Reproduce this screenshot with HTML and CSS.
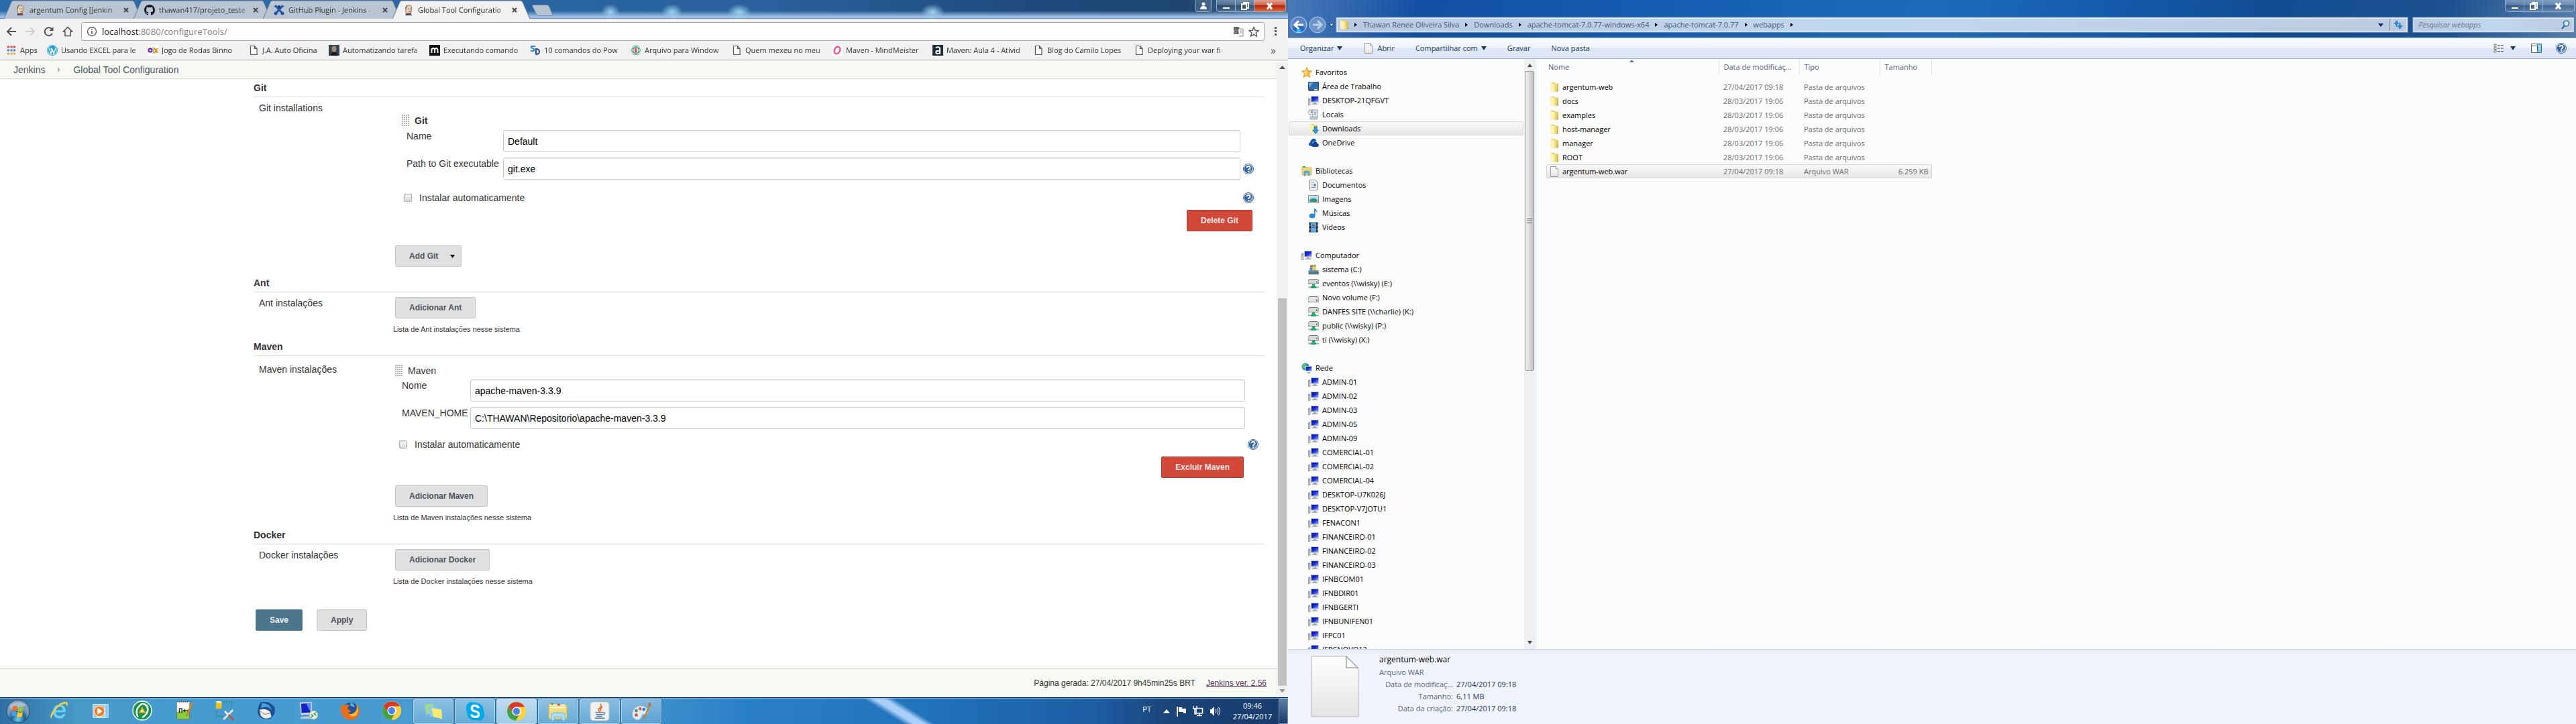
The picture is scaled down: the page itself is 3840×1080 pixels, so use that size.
FILE: index.html
```html
<!DOCTYPE html>
<html lang="pt-BR">
<head>
<meta charset="utf-8">
<title>Global Tool Configuration [Jenkins]</title>
<link rel="stylesheet" href="styles.css">
</head>
<body>
<svg class="defs" width="0" height="0" aria-hidden="true">
  <defs>
    <linearGradient id="g-folder" x1="0" x2="1"><stop offset="0" stop-color="#fbf0a8"/><stop offset=".5" stop-color="#ecd36c"/><stop offset="1" stop-color="#d9b948"/></linearGradient>
    <linearGradient id="g-screen" x1="0" x2="1" y2="1"><stop offset="0" stop-color="#0b10a8"/><stop offset=".5" stop-color="#1a2ed0"/><stop offset="1" stop-color="#8fb4f4"/></linearGradient>
    <linearGradient id="g-page" x2="0" y2="1"><stop offset="0" stop-color="#fff"/><stop offset="1" stop-color="#e4e4e4"/></linearGradient>
    <radialGradient id="g-orb" cy=".85"><stop offset="0" stop-color="#6fd3f5"/><stop offset=".6" stop-color="#1d5f96"/><stop offset="1" stop-color="#7f9db8"/></radialGradient>
    <radialGradient id="g-back" cy=".9"><stop offset="0" stop-color="#4fd0ff"/><stop offset=".5" stop-color="#1565c0"/><stop offset="1" stop-color="#5d86c8"/></radialGradient>
  </defs>
  <symbol id="i-help" viewBox="0 0 16 16"><circle cx="8" cy="8" r="7.500" fill="#fff" stroke="#3b629a"/><circle cx="8" cy="8" r="6.200" fill="#3465a4"/><path d="M8 14.200a6.200 6.200 0 0 0 6.200-6.200q-3 1-6.200 6.200z" fill="#7da2d2"/><path d="M5.500 6.300C5.500 3 10.500 3.200 10.500 6.200c0 1.700-2.400 1.800-2.400 3.700M8.100 11v2" fill="none" stroke="#fff" stroke-width="2"/></symbol>
  <symbol id="i-doc" viewBox="0 0 16 16"><path d="M3.500 1.500h6l3.500 4v9h-9.500zM9.500 1.500v4H13" fill="#fff" stroke="#555" stroke-width="1.200"/></symbol>
  <symbol id="i-butler" viewBox="0 0 16 16"><path d="M4 9c-1-4-1-8 4-8s5 3 4.500 6L11 13l-3 2-4-2z" fill="#ecd0b5" stroke="#6b5a4c" stroke-width=".8"/><path d="M4 8C3 3 5 1 7 1L5 4z" fill="#6d6557"/><path d="M3 16c1-3 2-3.500 5-3.500s4 1 5 3.500z" fill="#48555f"/><path d="M7 13l5-1.500v3z" fill="#d13a35"/><path d="M7 6h1M10 6h1M8 9.500h3" stroke="#333"/></symbol>
  <symbol id="i-github" viewBox="0 0 16 16"><path d="M8 0C3.580 0 0 3.580 0 8c0 3.540 2.290 6.530 5.470 7.590.4.070.55-.17.55-.38v-1.490c-2.010.37-2.530-.49-2.690-.94-.09-.23-.48-.94-.82-1.130-.28-.15-.68-.52-.01-.53.63-.01 1.080.58 1.230.82.72 1.210 1.870.87 2.330.66.07-.52.28-.87.51-1.070-1.780-.2-3.640-.89-3.640-3.950 0-.87.31-1.590.82-2.150-.08-.2-.36-1.020.08-2.120 0 0 .67-.21 2.200.82a7.600 7.600 0 0 1 4 0c1.530-1.040 2.200-.82 2.200-.82.44 1.100.16 1.920.08 2.120.51.56.82 1.270.82 2.150 0 3.070-1.870 3.750-3.650 3.950.29.25.54.73.54 1.480v2.200c0 .21.15.46.55.38A8 8 0 0 0 16 8c0-4.420-3.580-8-8-8z" fill="#14181c"/></symbol>
  <symbol id="i-xwiki" viewBox="0 0 16 16"><path d="M3 2l10 11M13 2L3 13" stroke="#2456a6" stroke-width="3"/><path d="M1 3l3-2M15 3l-3-2" stroke="#2456a6" stroke-width="2"/><circle cx="8" cy="3" r="2" fill="#16325c"/><circle cx="3" cy="13" r="2.500" fill="#2456a6"/><circle cx="13" cy="13" r="2.500" fill="#2456a6"/></symbol>
  <symbol id="i-folder" viewBox="0 0 16 16"><path d="M2 1h6l1 1.500h4v12H5L2 13z" fill="#e6cc62"/><path d="M2 1l5 2v12.500l-5-2z" fill="#fcf3b4"/><path d="M7 3h7v12H7z" fill="url(#g-folder)"/><path d="M13 10v4" stroke="#6aa8d8"/></symbol>
  <symbol id="i-sheet" viewBox="0 0 16 16"><path d="M2.500.5h8l3 3.500v11.500h-11z" fill="url(#g-page)" stroke="#999"/><path d="M10.500.5V4h3" fill="#fff" stroke="#999"/></symbol>
  <symbol id="i-star" viewBox="0 0 16 16"><path d="M8 .5l2.200 5 5.300.5-4 3.700 1.300 5.800L8 12.500 3.200 15.500l1.300-5.800L.5 6l5.300-.5z" fill="#fdb833" stroke="#dc8a1a" stroke-width=".8"/><path d="M8 2.500v8L4.500 13 5.500 9.500 3 7l3.500-.5z" fill="#ffe29a"/></symbol>
  <symbol id="i-desk" viewBox="0 0 16 16"><rect x=".5" y="1.500" width="15" height="12" fill="#2f6fb2" stroke="#334a66"/><path d="M1 2h7L1 10z" fill="#6ca9e0"/><path d="M1 12h14v3H1z" fill="#4e5b69"/><path d="M9 12h5v2H9z" fill="#dfe6ec"/></symbol>
  <symbol id="i-pc" viewBox="0 0 16 16"><path d="M.5 5h2.500v9.500H.5z" fill="#c9cec9" stroke="#7b857b" stroke-width=".7"/><path d="M4 1h12v10H4z" fill="#c8ccd4"/><path d="M5 2h10v7.500H5z" fill="url(#g-screen)"/><path d="M8 11h4v1.500h2.500V14h-9v-1.500H8z" fill="#a5a9b0"/><path d="M1 7h1" stroke="#3fa34a"/></symbol>
  <symbol id="i-recent" viewBox="0 0 16 16"><circle cx="4.500" cy="4.500" r="4" fill="#f3f3f3" stroke="#8b8b8b"/><path d="M4.500 2v3h2" fill="none" stroke="#555"/><path d="M7 1h7v11H7z" fill="#eef3f7" stroke="#8b97a2"/><path d="M9 4h3M9 6h3M9 8h3" stroke="#5a86ae"/><path d="M3 11h11v4H3z" fill="#c2c7cc" stroke="#8b8b8b" stroke-width=".6"/></symbol>
  <symbol id="i-down" viewBox="0 0 16 16"><use href="#i-folder"/><path d="M9 5h4v5h2.500L11 15.500 6.500 10H9z" fill="#2d9be0" stroke="#1a6db0" stroke-width=".7"/></symbol>
  <symbol id="i-cloud" viewBox="0 0 16 16"><path d="M5 13C0 13 0 8 3 7.500 4 1 11 0 12 5l-5 2z" fill="#1755ae"/><path d="M7 14c-3-1-2-5 0-5 1-4 6-4 6.500 0 3 0 3 5 0 5z" fill="#0d429a"/></symbol>
  <symbol id="i-libs" viewBox="0 0 16 16"><path d="M1 2h5l1 1h8v11H1z" fill="#efd778" stroke="#c6a43c" stroke-width=".7"/><path d="M2 1h4v2H2z" fill="#4db04a"/><path d="M4 15V9q4-3 8 0v6h-2v-4H6v4z" fill="#5eb5e8" stroke="#3183bd" stroke-width=".6"/></symbol>
  <symbol id="i-text" viewBox="0 0 16 16"><path d="M2.500.5h8l3 3v12h-11z" fill="#fff" stroke="#777"/><path d="M4.500 4h5M4.500 6.500h3M4.500 9h3M4.500 11.500h7" stroke="#6f8397"/><path d="M8.500 6h3v4h-3z" fill="#2f87c8"/></symbol>
  <symbol id="i-image" viewBox="0 0 16 16"><path d="M.5 2.500h15v11H.5z" fill="#fff" stroke="#8c8c8c"/><path d="M2 4h12v8H2z" fill="#a6ddf2"/><path d="M2 9q6-4 12 0v3H2z" fill="#2c948b"/></symbol>
  <symbol id="i-music" viewBox="0 0 16 16"><ellipse cx="6" cy="12" rx="4.500" ry="3.500" fill="#2b8bd8"/><path d="M9 12V.5q4 2 5 7-2-2.500-3.500-3V12z" fill="#2b8bd8"/></symbol>
  <symbol id="i-video" viewBox="0 0 16 16"><path d="M1 .5h14v15H1z" fill="#353c44"/><path d="M4 1h8v6.500H4zM4 8.500h8V15H4z" fill="#5aaee8"/><path d="M2.500 1v14M13.500 1v14" stroke="#e8e8e8" stroke-dasharray="1 1"/><path d="M6 4h4v2H6z" fill="#a9502f"/></symbol>
  <symbol id="i-sys" viewBox="0 0 16 16"><path d="M1 9h14l1 2v4.500H.5V11z" fill="#7f8b95"/><path d="M1 11.500h14V15H1z" fill="#4b7f94"/><path d="M3 2l4-1v3.500L3 5.500z" fill="#e65a2c"/><path d="M7.500 1h4v4l-4-.5z" fill="#7cbb42"/><path d="M2.500 6l4-1v4h-4z" fill="#3b8ddb"/><path d="M7.500 5l4 .5V9h-4z" fill="#f6c331"/></symbol>
  <symbol id="i-net" viewBox="0 0 16 16"><path d="M2 1.500h12l2 2.500v4.500H0V4z" fill="#d9d9dc" stroke="#77777d"/><path d="M12 4.500h2V7h-2z" fill="#3fb05a"/><path d="M6 9h4v3h-4z" fill="#2fae77"/><path d="M0 13.500h16" stroke="#9bb5a8" stroke-width="2"/><path d="M4 13.500h8" stroke="#22a568" stroke-width="3"/></symbol>
  <symbol id="i-drive" viewBox="0 0 16 16"><path d="M2 6.500h12l2 3v5H0v-5z" fill="#e4e4e6" stroke="#77777d"/><path d="M12 10.500h2V13h-2z" fill="#4aa55a"/></symbol>
  <symbol id="i-rede" viewBox="0 0 16 16"><circle cx="6" cy="6" r="5.500" fill="#2b8fd6"/><path d="M2 3q4-3 5 0T4 9q-3-2-2-6z" fill="#67c45c"/><path d="M6 5h10v8H6z" fill="#c8ccd4"/><path d="M7 6h8v6H7z" fill="url(#g-screen)"/><path d="M9 14h4v2H9z" fill="#a5a9b0"/></symbol>
  <symbol id="i-chrome" viewBox="0 0 32 32"><circle cx="16" cy="16" r="15" fill="#fbd13c"/><path d="M3 8.500A15 15 0 0 1 29 9H16a7 7 0 0 0-6 10z" fill="#d83b2e"/><path d="M3 8.500A15 15 0 0 0 15 31l6-11a7 7 0 0 1-11-1z" fill="#45a148"/><circle cx="16" cy="16" r="7" fill="#fff"/><circle cx="16" cy="16" r="5.500" fill="#4a83ee"/></symbol>
  <symbol id="i-tabshape" viewBox="0 0 205 28"><path d="M0 28.500L11 3q1-2 3-2h177q2 0 3 2l11 25.500z" fill="currentColor" stroke="#6b7f96"/></symbol>
</svg>

<div class="desktop">
  <div class="left-screen">
    <section class="browser" aria-label="Google Chrome">
      <header class="tabstrip">
        <ul class="tabs">
          <li class="tab"><svg class="tab-shape"><use href="#i-tabshape"/></svg><svg class="ico"><use href="#i-butler"/></svg><span class="tab-text">argentum Config [Jenkin</span><button class="tab-x" aria-label="Fechar"><svg width="8" height="8"><path d="M1 1l6 6M7 1L1 7" stroke="#444" stroke-width="2"/></svg></button></li>
          <li class="tab"><svg class="tab-shape"><use href="#i-tabshape"/></svg><svg class="ico"><use href="#i-github"/></svg><span class="tab-text">thawan417/projeto_teste</span><button class="tab-x" aria-label="Fechar"><svg width="8" height="8"><path d="M1 1l6 6M7 1L1 7" stroke="#444" stroke-width="2"/></svg></button></li>
          <li class="tab"><svg class="tab-shape"><use href="#i-tabshape"/></svg><svg class="ico"><use href="#i-xwiki"/></svg><span class="tab-text">GitHub Plugin - Jenkins -</span><button class="tab-x" aria-label="Fechar"><svg width="8" height="8"><path d="M1 1l6 6M7 1L1 7" stroke="#444" stroke-width="2"/></svg></button></li>
          <li class="tab active"><svg class="tab-shape"><use href="#i-tabshape"/></svg><svg class="ico"><use href="#i-butler"/></svg><span class="tab-text">Global Tool Configuratio</span><button class="tab-x" aria-label="Fechar"><svg width="8" height="8"><path d="M1 1l6 6M7 1L1 7" stroke="#444" stroke-width="2"/></svg></button></li>
        </ul>
        <button class="newtab" aria-label="Nova guia"><svg width="34" height="18" viewBox="0 0 34 18"><path d="M1.500 2q0-1.500 2-1.500h20q2 0 3 2l5 12q1 2-1 2H11q-2 0-3-2z" fill="#b4c2d2" stroke="#7189a6"/></svg></button>
        <span class="grow"></span>
        <button class="glass-btn user" aria-label="Usuário"><svg width="10" height="12" viewBox="0 0 10 12"><circle cx="5" cy="3" r="2.500" fill="#fff"/><path d="M0 11q0-5 5-5t5 5z" fill="#fff"/></svg></button>
        <div class="winbtns">
          <button aria-label="Minimizar"><svg width="14" height="12"><path d="M1.500 7.500h11v3h-11z" fill="#fff" stroke="#456"/></svg></button>
          <button aria-label="Restaurar"><svg width="14" height="12"><path d="M4 1h8v8h-2M2 3h7v8H2z" fill="none" stroke="#fff" stroke-width="2"/></svg></button>
          <button class="close red" aria-label="Fechar"><svg width="14" height="12"><path d="M3 1.500l7 9M10 1.500l-7 9" stroke="#fff" stroke-width="3"/></svg></button>
        </div>
      </header>

      <div class="toolbar">
        <button class="nav" aria-label="Voltar"><svg width="16" height="16" viewBox="0 0 16 16"><path d="M15 8H2M8 2L2 8l6 6" fill="none" stroke="#555" stroke-width="2"/></svg></button>
        <button class="nav" aria-label="Avançar"><svg width="16" height="16" viewBox="0 0 16 16"><path d="M1 8h13M8 2l6 6-6 6" fill="none" stroke="#ccc" stroke-width="2"/></svg></button>
        <button class="nav" aria-label="Recarregar"><svg width="16" height="16" viewBox="0 0 16 16"><path d="M13 11a6 6 0 1 1-.5-6.500" fill="none" stroke="#555" stroke-width="2"/><path d="M14.500 1v6h-6z" fill="#555"/></svg></button>
        <button class="nav" aria-label="Início"><svg width="16" height="16" viewBox="0 0 16 16"><path d="M1.500 8L8 1.500 14.500 8H12v6.500H4V8z" fill="none" stroke="#555" stroke-width="1.600"/></svg></button>
        <div class="omnibox">
          <svg width="16" height="16" viewBox="0 0 16 16"><circle cx="8" cy="8" r="6.500" fill="none" stroke="#555" stroke-width="1.300"/><path d="M8 7v4.500M8 4.200v1.600" stroke="#555" stroke-width="1.600"/></svg>
          <span class="url">localhost<span class="path">:8080/configureTools/</span></span>
          <svg width="16" height="16" viewBox="0 0 16 16"><path d="M1 1h8l2 11H1z" fill="#666"/><path d="M8 4h7v11H9" fill="#fff" stroke="#888"/><path d="M7 6.500H5a2 2 0 1 0 .5 2.500M10 7h4M12 6c0 3-1 4-2 5M11 8l3 3" fill="none" stroke="#aaa"/></svg>
          <svg width="16" height="16" viewBox="0 0 16 16"><path d="M8 1.500l2 4.800 5 .4-3.800 3.300 1.200 5L8 12.300 3.600 15l1.200-5L1 6.700l5-.4z" fill="none" stroke="#555" stroke-width="1.400"/></svg>
        </div>
        <button class="nav dots" aria-label="Menu"><svg width="4" height="14"><path d="M0 0h3v3H0zM0 5h3v3H0zM0 10h3v3H0z" fill="#555"/></svg></button>
      </div>

      <nav class="bookmarks" aria-label="Favoritos">
        <a class="apps" href="#"><svg class="ico" viewBox="0 0 16 16"><path d="M2 3h12" stroke="#db4437" stroke-width="3" stroke-dasharray="3 1.500"/><path d="M2 8h12" stroke="#3e82d9" stroke-width="3" stroke-dasharray="3 1.500"/><path d="M2 13h12" stroke="#e9a53a" stroke-width="3" stroke-dasharray="3 1.500"/></svg><span>Apps</span></a>
        <a href="#"><svg class="ico" viewBox="0 0 16 16"><circle cx="8" cy="8" r="7.500" fill="#fff" stroke="#21a0cf"/><circle cx="8" cy="8" r="6.500" fill="#21a0cf"/><path d="M3 5l3 8 2-6 2 6 3-8M6 5l2 5" fill="none" stroke="#fff" stroke-width="1.400"/></svg><span>Usando EXCEL para le</span></a>
        <a href="#"><svg class="ico" viewBox="0 0 16 16"><path d="M0 0h16v16H0z" fill="#fff"/><circle cx="4" cy="8" r="2.600" fill="none" stroke="#6e0ad6" stroke-width="2"/><path d="M8.500 3v10" stroke="#8cc63f" stroke-width="1.600"/><path d="M10 5l5 7M15 5l-5 7" stroke="#f28000" stroke-width="2"/></svg><span>Jogo de Rodas Binno</span></a>
        <a class="narrow" href="#"><svg class="ico"><use href="#i-doc"/></svg><span>J.A. Auto Oficina</span></a>
        <a href="#"><svg class="ico" viewBox="0 0 16 16"><path d="M0 0h16v16H0z" fill="#32424e"/><ellipse cx="8" cy="6" rx="3.500" ry="4.500" fill="#a98a78"/><path d="M3 16q0-5 5-5t5 5z" fill="#15191d"/></svg><span>Automatizando tarefa</span></a>
        <a href="#"><svg class="ico" viewBox="0 0 16 16"><path d="M0 0h16v16H0z" fill="#111"/><path d="M3.500 12V5M3.500 7q1-2 2.500-2t2 2v5M8 7q1-2 2.500-2t2 2v5" fill="none" stroke="#fff" stroke-width="1.800"/></svg><span>Executando comando</span></a>
        <a href="#"><svg class="ico" viewBox="0 0 16 16"><path d="M8 2H3q-2 0-1 2l4 2q1 3-1 3H1" fill="none" stroke="#3a86d0" stroke-width="2"/><path d="M9 6v8q5 0 5-4t-5-4z" fill="none" stroke="#2b4fa8" stroke-width="2"/></svg><span>10 comandos do Pow</span></a>
        <a href="#"><svg class="ico" viewBox="0 0 16 16"><g fill="none" stroke="#4f9a86"><ellipse cx="8" cy="8" rx="7" ry="4"/><ellipse cx="8" cy="8" rx="7" ry="4" transform="rotate(60 8 8)"/><ellipse cx="8" cy="8" rx="7" ry="4" transform="rotate(120 8 8)"/></g><path d="M6.500 5v6h2q2-1.500 0-3 1.500-2-.2-3z" fill="#e33"/></svg><span>Arquivo para Window</span></a>
        <a href="#"><svg class="ico"><use href="#i-doc"/></svg><span>Quem mexeu no meu</span></a>
        <a href="#"><svg class="ico" viewBox="0 0 16 16"><path d="M0 0h16v16H0z" fill="#fff"/><ellipse cx="8" cy="8" rx="4" ry="5.500" transform="rotate(25 8 8)" fill="none" stroke="#e9537f" stroke-width="2.400"/></svg><span>Maven - MindMeister</span></a>
        <a href="#"><svg class="ico" viewBox="0 0 16 16"><path d="M0 0h16v16H0z" fill="#1b2b38"/><path d="M5 4q5-2 6 1v8H7q-3-1-1-4h5" fill="none" stroke="#fff" stroke-width="2"/></svg><span>Maven: Aula 4 - Ativid</span></a>
        <a href="#"><svg class="ico"><use href="#i-doc"/></svg><span>Blog do Camilo Lopes</span></a>
        <a href="#"><svg class="ico"><use href="#i-doc"/></svg><span>Deploying your war fi</span></a>
        <button class="more" aria-label="Mais favoritos">»</button>
      </nav>

      <div class="viewport">
        <div class="page">
          <nav class="crumbs"><a href="#">Jenkins</a><svg width="6" height="10"><path d="M1 1l4 4-4 4z" fill="#b5b9b0"/></svg><a href="#">Global Tool Configuration</a></nav>
          <form class="config">
            <h2>Git</h2>
            <div class="section git">
              <div class="sec-label">Git installations</div>
              <div class="sec-body">
                <div class="item">
                  <div class="item-head"><i class="grip"></i><b>Git</b></div>
                  <div class="fields">
                    <label for="gname">Name</label><input id="gname" type="text" value="Default">
                    <label for="gpath">Path to Git executable</label><input id="gpath" type="text" value="git.exe"><svg class="help"><use href="#i-help"/></svg>
                  </div>
                  <div class="auto"><input type="checkbox" id="gauto"><label for="gauto">Instalar automaticamente</label><svg class="help"><use href="#i-help"/></svg></div>
                  <div class="del"><button type="button" class="btn danger">Delete Git</button></div>
                </div>
                <button type="button" class="btn">Add Git<svg class="caret" width="7" height="5"><path d="M0 0h7L3.500 5z"/></svg></button>
              </div>
            </div>
            <h2>Ant</h2>
            <div class="section">
              <div class="sec-label">Ant instalações</div>
              <div class="sec-body"><button type="button" class="btn">Adicionar Ant</button><p class="note">Lista de Ant instalações nesse sistema</p></div>
            </div>
            <h2>Maven</h2>
            <div class="section maven">
              <div class="sec-label">Maven instalações</div>
              <div class="sec-body">
                <div class="item">
                  <div class="item-head"><i class="grip"></i><span>Maven</span></div>
                  <div class="fields">
                    <label for="mname">Nome</label><input id="mname" type="text" value="apache-maven-3.3.9">
                    <label for="mhome">MAVEN_HOME</label><input id="mhome" type="text" value="C:\THAWAN\Repositorio\apache-maven-3.3.9">
                  </div>
                  <div class="auto"><input type="checkbox" id="mauto"><label for="mauto">Instalar automaticamente</label><svg class="help"><use href="#i-help"/></svg></div>
                  <div class="del"><button type="button" class="btn danger">Excluir Maven</button></div>
                </div>
                <button type="button" class="btn">Adicionar Maven</button><p class="note">Lista de Maven instalações nesse sistema</p>
              </div>
            </div>
            <h2>Docker</h2>
            <div class="section">
              <div class="sec-label">Docker instalações</div>
              <div class="sec-body"><button type="button" class="btn">Adicionar Docker</button><p class="note">Lista de Docker instalações nesse sistema</p></div>
            </div>
            <div class="actions"><button type="button" class="btn primary">Save</button><button type="button" class="btn">Apply</button></div>
          </form>
          <footer class="foot"><span>Página gerada: 27/04/2017 9h45min25s BRT</span><a href="#">Jenkins ver. 2.56</a></footer>
        </div>
        <div class="vscroll" aria-hidden="true">
          <svg width="9" height="6"><path d="M0 6l4.500-5L9 6z" fill="#505050"/></svg>
          <div class="vtrack"><div class="vthumb"></div></div>
          <svg width="9" height="6"><path d="M0 0l4.500 5L9 0z" fill="#909090"/></svg>
        </div>
      </div>
    </section>

    <footer class="taskbar">
      <button class="start" aria-label="Iniciar"><svg width="36" height="36" viewBox="0 0 36 36"><circle cx="18" cy="18" r="17" fill="url(#g-orb)" stroke="#2a4a66"/><path d="M6 9q12-9 24 0-12 6-24 5z" fill="#fff" opacity=".35"/><path d="M10 11q4-2 7 0l-1 7q-4-2-7 0z" fill="#ee6a32"/><path d="M18 11q4 2 8 0l-1 7q-4 2-8 0z" fill="#8cc63f"/><path d="M9 19q4-2 7 0l-1 7q-3-2-7 0z" fill="#3fa0ea"/><path d="M17 19q4 2 8 0l-1 7q-4 2-8 0z" fill="#fbc72f"/></svg></button>
      <div class="tasks">
        <button aria-label="Internet Explorer"><svg viewBox="0 0 32 32"><path d="M27 19H11q1 5 6 5 4 0 5-3h5q-3 9-11 8Q6 28 6 17 7 6 17 6q11 1 10 13zM11 15h11q-1-5-5.500-5T11 15z" fill="#6fd0f6" stroke="#2b93cf" stroke-width=".8"/><path d="M4 29Q-1 25 9 13T28 2q4 2 0 8 1-5-3-5Q15 7 8 19T6 28z" fill="#f4cf45"/></svg></button>
        <button aria-label="Windows Media Player"><svg viewBox="0 0 32 32"><path d="M11 6h17v21H11z" fill="#8ccaf0" stroke="#dbeefb"/><path d="M4 6h19v21H4z" fill="#a8c9de" stroke="#e1f1fb"/><circle cx="14" cy="17" r="8.500" fill="#f37b21" stroke="#fff"/><path d="M11 11.500l8 5.500-8 5.500z" fill="#fff"/></svg></button>
        <button aria-label="Sync"><svg viewBox="0 0 32 32"><circle cx="16" cy="16" r="15" fill="#169447" stroke="#fff" stroke-width="1.500"/><path d="M9 26Q3 13 16 5q9 1 9 11M23 7q6 12-7 20" fill="none" stroke="#fff" stroke-width="2.500"/><path d="M16 12l4 7h-8z" fill="#fff" stroke="#f6a623" stroke-width="2"/></svg></button>
        <button aria-label="Notepad++"><svg viewBox="0 0 32 32"><path d="M5 2h20v28H5z" fill="#8ccf3e" stroke="#666"/><path d="M5 2h20v12L5 18z" fill="#f8f8f8"/><path d="M6 2h18" stroke="#777" stroke-width="3" stroke-dasharray="1.500 1.500"/><path d="M9 20v-7h4v7M15 16h5M17.500 13.500v5M21 16h4" fill="none" stroke="#222" stroke-width="1.500"/><path d="M29 2l2 2-8 18-3 3 1-5z" fill="#e99a2d" stroke="#875c14" stroke-width=".6"/></svg></button>
        <button aria-label="Ferramentas"><svg viewBox="0 0 32 32"><path d="M1 2h9v11H1z" fill="#f1c21f"/><ellipse cx="5.500" cy="2.500" rx="4.500" ry="1.800" fill="#fdf0ae"/><path d="M13 2h13v9M2 17v8h11" fill="none" stroke="#1c8a3c" stroke-width="1.500" stroke-dasharray="2 2"/><path d="M15 17l13 13M28 15L13 30" stroke="#e8e8e8" stroke-width="3"/><path d="M21 23l8 8" stroke="#b3522a" stroke-width="3"/></svg></button>
        <button aria-label="Thunderbird"><svg viewBox="0 0 32 32"><path d="M6 3q14-4 22 8 3 11-7 18Q4 32 1 19 2 7 6 3z" fill="#1c4f94"/><path d="M8 4q12 0 16 12-7-9-17-4z" fill="#4da1dc"/><path d="M4 15q9-4 17 3l2 8q-10 6-17-2z" fill="#f0eee8"/><path d="M5 17l7 5 9-2" fill="none" stroke="#777"/></svg></button>
        <button aria-label="Área de trabalho remota"><svg viewBox="0 0 32 32"><path d="M2 3l19-1v20L4 23z" fill="#d9dde3"/><path d="M4 5l15-1v15L5 20z" fill="#1620c8"/><path d="M12 4l7 0v15z" fill="#5a86ec"/><path d="M4 26l14-1 3 4H2z" fill="#c7c9cf"/><circle cx="24" cy="23" r="7" fill="#e9efe6" stroke="#7a8"/><path d="M20 22l3 2-3 3M28 19l-3 2 3 3" fill="none" stroke="#2c9a3c" stroke-width="1.600"/></svg></button>
        <button aria-label="Firefox"><svg viewBox="0 0 32 32"><circle cx="17" cy="15" r="12" fill="#24539b"/><path d="M17 3q6 2 6 8l-7-3z" fill="#5ab0e4"/><path d="M3 5q-4 9 0 17 5 9 14 9 12-1 14-13 0-8-5-13 2 9-3 14-6 5-11 0 4 1 5-2l-5-4q0-4 3-5-4-3-8 0-3 0-4-3z" fill="#ea6d1b"/><path d="M26 5q3 9-3 14-5 4-9 2 5 7 12 3 6-9 0-19z" fill="#f8b62b"/></svg></button>
        <button aria-label="Chrome"><svg><use href="#i-chrome"/></svg></button>
        <button class="open" aria-label="Notas autoadesivas"><svg viewBox="0 0 32 32"><path d="M2 6l13-3 3 14-13 4z" fill="#9edb8a"/><path d="M8 10l13-3 2 15-12 3z" fill="#8cc9ef"/><path d="M13 11l16 2 1 15-14-3z" fill="#f8ea6e"/></svg></button>
        <button class="open" aria-label="Skype"><svg viewBox="0 0 32 32"><path d="M10 1q4 1 6 1 14 1 14 15 2 5 0 9-4 7-11 4Q4 32 3 17-1 3 10 1z" fill="#00a9ea"/><path d="M22 11q-2-4-6-4-5 0-5 4t5 5q6 1 6 5t-5 4q-5 0-7-4" fill="none" stroke="#fff" stroke-width="3.500"/></svg></button>
        <button class="open current" aria-label="Chrome"><svg><use href="#i-chrome"/></svg></button>
        <button class="open" aria-label="Explorer"><svg viewBox="0 0 32 32"><path d="M1 4h8l2 2h19v22H1z" fill="#f2dc86" stroke="#caa74a"/><path d="M3 6h24M3 10h24" stroke="#fff9d6" stroke-width="2"/><path d="M5 3h3v3H5z" fill="#3ca64a"/><path d="M15 4h4v3h-4z" fill="#d84a3a"/><path d="M5 31V20q11-4 22 0v11h-5v-6H10v6z" fill="#a9daf2" stroke="#6cb1da"/></svg></button>
        <button class="open" aria-label="Java"><svg viewBox="0 0 32 32"><rect x="1" y="1" width="30" height="30" rx="5" fill="#f0f0ee" stroke="#bbb"/><path d="M17 4q3 4-1 7t0 6M20 9q-4 3-2 7" fill="none" stroke="#e76f2e" stroke-width="2"/><path d="M9 18h13M10 21h11M11 24h9M8 27h16M22 18q4 0 0 4" fill="none" stroke="#53789a" stroke-width="1.600"/></svg></button>
        <button class="open" aria-label="Paint"><svg viewBox="0 0 32 32"><path d="M3 14Q9 5 20 8q9 4 6 12-3 2-8 1-2 9-9 9Q-2 27 3 14z" fill="#dcebf5" stroke="#8ab0cc"/><circle cx="8" cy="15" r="2.500" fill="#4a9b4c"/><circle cx="14" cy="12" r="2.500" fill="#e05a36"/><circle cx="8" cy="22" r="2.500" fill="#e0483c"/><circle cx="20" cy="13" r="2.500" fill="#3c7fd0"/><path d="M29 7L20 28" stroke="#c7812e" stroke-width="2.500"/><path d="M28 8q-2-5 1-7 4 3 2 8z" fill="#b8743a"/></svg></button>
      </div>
      <div class="tray">
        <span class="lang">PT</span>
        <svg width="10" height="6"><path d="M0 6l5-6 5 6z" fill="#fff"/></svg>
        <svg width="16" height="16"><path d="M2 1v15" stroke="#fff" stroke-width="2"/><path d="M4 2h5v2h6v7h-4V9H4z" fill="#fff"/></svg>
        <svg width="16" height="16"><path d="M5 3.500h9.500V11H5zM10 11v3M6 14.500h8" fill="none" stroke="#fff" stroke-width="1.500"/><path d="M1 0v4h5V0M3 4v8h3" fill="none" stroke="#fff" stroke-width="1.500"/></svg>
        <svg width="16" height="16"><path d="M1 5h2l4-4v14l-4-4H1z" fill="#fff"/><path d="M9 5q2 3 0 6M11.500 3.500q3 4.500 0 9M13.500 2q4 6 0 12" fill="none" stroke="#fff"/></svg>
        <div class="clock"><time>09:46</time><span>27/04/2017</span></div>
        <button class="peek" aria-label="Mostrar área de trabalho"></button>
      </div>
    </footer>
  </div>

  <section class="explorer" aria-label="Windows Explorer">
    <header class="glass">
      <div class="winbtns">
        <button aria-label="Minimizar"><svg width="14" height="12"><path d="M1.500 7.500h11v3h-11z" fill="#fff" stroke="#456"/></svg></button>
        <button aria-label="Restaurar"><svg width="14" height="12"><path d="M4 1h8v8h-2M2 3h7v8H2z" fill="none" stroke="#fff" stroke-width="2"/></svg></button>
        <button class="close" aria-label="Fechar"><svg width="14" height="12"><path d="M3 1.500l7 9M10 1.500l-7 9" stroke="#fff" stroke-width="3"/></svg></button>
      </div>
      <div class="addr-row">
        <button class="round" aria-label="Voltar"><svg width="26" height="26" viewBox="0 0 26 26"><circle cx="13" cy="13" r="12" fill="url(#g-back)" stroke="#c5d8ee"/><path d="M20 13H8M13 7l-6 6 6 6" fill="none" stroke="#fff" stroke-width="3"/></svg></button>
        <button class="round" aria-label="Avançar"><svg width="26" height="26" viewBox="0 0 26 26"><circle cx="13" cy="13" r="12" fill="#6d94c8" stroke="#b0c8e4"/><path d="M6 13h12M13 7l6 6-6 6" fill="none" stroke="#b9cfe8" stroke-width="3"/></svg></button>
        <button class="hist" aria-label="Histórico"><svg width="8" height="5"><path d="M0 0h8L4 5z" fill="#a8e0f8" stroke="#123"/></svg></button>
        <div class="address">
          <svg class="ico"><use href="#i-folder"/></svg>
          <i class="sep"></i><a href="#">Thawan Renee Oliveira Silva</a><i class="sep"></i><a href="#">Downloads</a><i class="sep"></i><a href="#">apache-tomcat-7.0.77-windows-x64</a><i class="sep"></i><a href="#">apache-tomcat-7.0.77</a><i class="sep"></i><a href="#">webapps</a><i class="sep"></i>
          <span class="grow"></span>
          <svg width="8" height="5"><path d="M0 0h8L4 5z" fill="#126"/></svg>
          <button class="refresh" aria-label="Atualizar"><svg width="16" height="16"><path d="M6 1L1 7h3q0 4 3 5-1-3 0-5h2zM10 15l5-6h-3q0-4-3-5 1 3 0 5H7z" fill="#2f86cf"/></svg></button>
        </div>
        <div class="search"><input type="text" placeholder="Pesquisar webapps" aria-label="Pesquisar webapps"><svg width="14" height="14"><circle cx="8.500" cy="5" r="4" fill="#d9eefb" stroke="#2f72b8" stroke-width="1.600"/><path d="M6 8l-4 5" stroke="#2f72b8" stroke-width="2.400"/></svg></div>
      </div>
    </header>

    <div class="commands">
      <button>Organizar<i class="tri"></i></button>
      <button><svg class="ico"><use href="#i-sheet"/></svg>Abrir</button>
      <button>Compartilhar com<i class="tri"></i></button>
      <button>Gravar</button>
      <button>Nova pasta</button>
      <span class="grow"></span>
      <button class="views" aria-label="Exibição"><svg width="16" height="14"><path d="M1 1h3v3H1zM1 5.500h3v3H1zM1 10h3v3H1z" fill="#fff" stroke="#777"/><path d="M6 2.500h9M6 7h9M6 11.500h9" stroke="#456" stroke-dasharray="4 1"/></svg><i class="tri"></i></button>
      <button aria-label="Painel de visualização"><svg width="16" height="14"><path d="M.5.500h15v13H.5z" fill="#fff" stroke="#567"/><path d="M10 1h5v12h-5z" fill="#7fd0ea"/><path d="M1 3.500h9M9.500 1v12" stroke="#567"/></svg></button>
      <button aria-label="Ajuda"><svg width="16" height="16"><use href="#i-help"/></svg></button>
    </div>

    <div class="panes">
      <nav class="tree">
        <ul>
          <li class="root"><svg class="ico"><use href="#i-star"/></svg>Favoritos</li>
          <li><svg class="ico"><use href="#i-desk"/></svg>Área de Trabalho</li>
          <li><svg class="ico"><use href="#i-pc"/></svg>DESKTOP-21QFGVT</li>
          <li><svg class="ico"><use href="#i-recent"/></svg>Locais</li>
          <li class="sel"><svg class="ico"><use href="#i-down"/></svg>Downloads</li>
          <li><svg class="ico"><use href="#i-cloud"/></svg>OneDrive</li>
        </ul>
        <ul>
          <li class="root"><svg class="ico"><use href="#i-libs"/></svg>Bibliotecas</li>
          <li><svg class="ico"><use href="#i-text"/></svg>Documentos</li>
          <li><svg class="ico"><use href="#i-image"/></svg>Imagens</li>
          <li><svg class="ico"><use href="#i-music"/></svg>Músicas</li>
          <li><svg class="ico"><use href="#i-video"/></svg>Vídeos</li>
        </ul>
        <ul>
          <li class="root"><svg class="ico"><use href="#i-pc"/></svg>Computador</li>
          <li><svg class="ico"><use href="#i-sys"/></svg>sistema (C:)</li>
          <li><svg class="ico"><use href="#i-net"/></svg>eventos (\\wisky) (E:)</li>
          <li><svg class="ico"><use href="#i-drive"/></svg>Novo volume (F:)</li>
          <li><svg class="ico"><use href="#i-net"/></svg>DANFES SITE (\\charlie) (K:)</li>
          <li><svg class="ico"><use href="#i-net"/></svg>public (\\wisky) (P:)</li>
          <li><svg class="ico"><use href="#i-net"/></svg>ti (\\wisky) (X:)</li>
        </ul>
        <ul>
          <li class="root"><svg class="ico"><use href="#i-rede"/></svg>Rede</li>
          <li><svg class="ico"><use href="#i-pc"/></svg>ADMIN-01</li>
          <li><svg class="ico"><use href="#i-pc"/></svg>ADMIN-02</li>
          <li><svg class="ico"><use href="#i-pc"/></svg>ADMIN-03</li>
          <li><svg class="ico"><use href="#i-pc"/></svg>ADMIN-05</li>
          <li><svg class="ico"><use href="#i-pc"/></svg>ADMIN-09</li>
          <li><svg class="ico"><use href="#i-pc"/></svg>COMERCIAL-01</li>
          <li><svg class="ico"><use href="#i-pc"/></svg>COMERCIAL-02</li>
          <li><svg class="ico"><use href="#i-pc"/></svg>COMERCIAL-04</li>
          <li><svg class="ico"><use href="#i-pc"/></svg>DESKTOP-U7K026J</li>
          <li><svg class="ico"><use href="#i-pc"/></svg>DESKTOP-V7JOTU1</li>
          <li><svg class="ico"><use href="#i-pc"/></svg>FENACON1</li>
          <li><svg class="ico"><use href="#i-pc"/></svg>FINANCEIRO-01</li>
          <li><svg class="ico"><use href="#i-pc"/></svg>FINANCEIRO-02</li>
          <li><svg class="ico"><use href="#i-pc"/></svg>FINANCEIRO-03</li>
          <li><svg class="ico"><use href="#i-pc"/></svg>IFNBCOM01</li>
          <li><svg class="ico"><use href="#i-pc"/></svg>IFNBDIR01</li>
          <li><svg class="ico"><use href="#i-pc"/></svg>IFNBGERTI</li>
          <li><svg class="ico"><use href="#i-pc"/></svg>IFNBUNIFEN01</li>
          <li><svg class="ico"><use href="#i-pc"/></svg>IFPC01</li>
          <li><svg class="ico"><use href="#i-pc"/></svg>IFPCNOVO12</li>
        </ul>
      </nav>
      <div class="tscroll" aria-hidden="true">
        <svg width="7" height="5"><path d="M0 5l3.500-5L7 5z" fill="#444"/></svg>
        <div class="ttrack"><div class="tthumb"><svg width="8" height="8"><path d="M0 .500h8M0 3.500h8M0 6.500h8" stroke="#666"/></svg></div></div>
        <svg width="7" height="5"><path d="M0 0l3.500 5L7 0z" fill="#444"/></svg>
      </div>
      <main class="files">
        <table>
          <thead><tr><th class="c-name">Nome<svg class="sort" width="7" height="4"><path d="M0 4l3.500-4L7 4z" fill="#4a80a8"/></svg></th><th class="c-date">Data de modificaç...</th><th class="c-type">Tipo</th><th class="c-size">Tamanho</th></tr></thead>
          <tbody>
            <tr><td><svg class="ico"><use href="#i-folder"/></svg>argentum-web</td><td>27/04/2017 09:18</td><td>Pasta de arquivos</td><td></td></tr>
            <tr><td><svg class="ico"><use href="#i-folder"/></svg>docs</td><td>28/03/2017 19:06</td><td>Pasta de arquivos</td><td></td></tr>
            <tr><td><svg class="ico"><use href="#i-folder"/></svg>examples</td><td>28/03/2017 19:06</td><td>Pasta de arquivos</td><td></td></tr>
            <tr><td><svg class="ico"><use href="#i-folder"/></svg>host-manager</td><td>28/03/2017 19:06</td><td>Pasta de arquivos</td><td></td></tr>
            <tr><td><svg class="ico"><use href="#i-folder"/></svg>manager</td><td>28/03/2017 19:06</td><td>Pasta de arquivos</td><td></td></tr>
            <tr><td><svg class="ico"><use href="#i-folder"/></svg>ROOT</td><td>28/03/2017 19:06</td><td>Pasta de arquivos</td><td></td></tr>
            <tr class="sel"><td><svg class="ico"><use href="#i-sheet"/></svg>argentum-web.war</td><td>27/04/2017 09:18</td><td>Arquivo WAR</td><td>6.259 KB</td></tr>
          </tbody>
        </table>
      </main>
    </div>

    <footer class="details">
      <svg width="72" height="92" viewBox="0 0 72 92"><path d="M1 1h51l19 20v70H1z" fill="url(#g-page)" stroke="#b5b5b5"/><path d="M53 1v17h17z" fill="#fafafa" stroke="#a5a5a5" stroke-width="1.500"/></svg>
      <div class="info">
        <strong>argentum-web.war</strong>
        <span class="kind">Arquivo WAR</span>
        <dl><dt>Data de modificaç...</dt><dd>27/04/2017 09:18</dd><dt>Tamanho:</dt><dd>6,11 MB</dd><dt>Data da criação:</dt><dd>27/04/2017 09:18</dd></dl>
      </div>
    </footer>
  </section>
</div>
</body>
</html>
```

FILE: styles.css
```css
* { box-sizing: border-box; }
body { margin: 0; font: 11px/16px "Open Sans", "Noto Sans", sans-serif; color: #000; }
ul, dl, dd, p, h2 { margin: 0; padding: 0; }
ul { list-style: none; }
a { color: inherit; text-decoration: none; }
button { border: 0; padding: 0; background: none; font: inherit; color: inherit; display: flex; align-items: center; justify-content: center; }
svg { display: block; flex: none; }
.defs { position: absolute; }
.ico { width: 16px; height: 16px; }
.grow { flex: 1; }

.desktop { display: grid; grid-template-columns: 1fr 1fr; height: 100vh; overflow: hidden; }
.left-screen, .browser { display: flex; flex-direction: column; min-height: 0; min-width: 0; }
.browser { flex: 1; }

/* Chrome window frame */
.tabstrip {
  display: flex; align-items: flex-start; height: 28px; padding: 0 3px 0 6px; flex: none;
  background:
    radial-gradient(ellipse 14px 12px at 910px 18px, #9fd2ee, transparent),
    radial-gradient(ellipse 16px 12px at 1002px 18px, #9fd2ee, transparent),
    radial-gradient(ellipse 18px 12px at 1102px 18px, #9fd2ee, transparent),
    radial-gradient(ellipse 18px 12px at 1390px 18px, #9fd2ee, transparent),
    linear-gradient(transparent 16px, #9fc2ea 25px, #9fc2ea 27px, #6d87a8 27px),
    linear-gradient(90deg, #2a6cab, #29619c 60%, #1f4a7c 80%, #1d456f 92%, #4a6f99);
}
.tabs { display: flex; height: 28px; }
.tab { position: relative; display: flex; align-items: center; width: 205px; height: 28px; padding: 2px 16px 0; margin-right: -12px; color: #333; }
.tab-shape { position: absolute; inset: 0; width: 205px; height: 28px; color: #b9c5d3; }
.tab.active { z-index: 1; color: #222; }
.tab.active .tab-shape { color: #f1f1f1; }
.tab .ico { position: relative; }
.tab-text { position: relative; width: 134px; margin: 0 3px 0 6px; white-space: nowrap; mask-image: linear-gradient(90deg, #000 85%, #0006); }
.tab-x { position: relative; width: 14px; height: 14px; }
.newtab { margin: 7px 0 0 14px; }
.winbtns { display: flex; height: 18px; border: 1px solid #9db4cf; border-top: 0; border-radius: 0 0 5px 5px; overflow: hidden; background: linear-gradient(#ffffff50, #ffffff20 50%, #00000020 50%, #ffffff20); }
.winbtns button { width: 28px; border-right: 1px solid #9db4cf; }
.winbtns .close { width: 46px; border-right: 0; }
.winbtns .red { background: linear-gradient(#e0a294, #cf5a40 50%, #b3260c 50%, #dc6b3f); }
.glass-btn { width: 25px; height: 18px; margin-right: 7px; border: 1px solid #9db4cf; border-top: 0; border-radius: 0 0 5px 5px; background: #ffffff20; }

.toolbar { display: flex; align-items: center; height: 37px; padding: 0 13px 0 9px; gap: 12px; background: #f1f1f1; flex: none; }
.toolbar .nav { width: 16px; height: 28px; }
.toolbar .dots { width: 11px; margin-left: -1px; }
.omnibox { flex: 1; display: flex; align-items: center; gap: 7px; height: 28px; padding: 0 7px; background: #fff; border: 1px solid #a6a6a6; border-radius: 3px; }
.url { flex: 1; font-size: 13px; line-height: 20px; color: #222; }
.path { color: #808080; }

.bookmarks { display: flex; align-items: center; gap: 11px; height: 25px; padding: 0 18px 4px 9px; background: #f1f1f1; border-bottom: 1px solid #b6b6b6; flex: none; color: #333; }
.bookmarks a { display: flex; align-items: center; gap: 5px; flex: none; width: 139px; }
.bookmarks a span { flex: 1; white-space: nowrap; mask-image: linear-gradient(90deg, #000 90%, #0006); }
.bookmarks a.apps { width: 50px; }
.bookmarks a.narrow { width: 109px; }
.bookmarks .apps span, .bookmarks .narrow span { mask-image: none; }
.bookmarks .more { margin-left: auto; font-size: 16px; color: #555; }

/* Jenkins page */
.viewport { flex: 1; display: flex; min-height: 0; background: #fff; }
.page { flex: 1; min-width: 0; display: flex; flex-direction: column; font: 14px/18px "Liberation Sans", Arial, sans-serif; color: #333; }
.crumbs { display: flex; align-items: center; gap: 18px; height: 28px; padding: 0 20px; background: #f6faf2; border-bottom: 1px solid #d3d7cf; color: #4d545d; flex: none; }
.config { flex: 1; padding: 0 18px 0 378px; }
h2 { font-size: 14px; line-height: 26px; border-bottom: 1px solid #dcdcdc; }
.section { display: grid; grid-template-columns: 203px 1fr; padding: 7px 0 6px 8px; }
.section.git { padding-bottom: 11px; }
.section.maven { padding-top: 11px; }
.item-head { display: flex; align-items: center; gap: 8px; height: 18px; }
.grip { width: 11px; height: 18px; background-image: radial-gradient(circle at 1px 1px, #b0b0b0 1px, transparent 1px); background-size: 3px 3px; }
.fields { display: grid; column-gap: 4px; row-gap: 8px; margin: 5px 0 18px; }
.fields label { grid-column: 1; white-space: nowrap; margin-right: -4px; }
.fields input { grid-column: 2; height: 33px; width: 100%; min-width: 0; padding: 0 6px; font: inherit; color: #000; border: 1px solid #ccc; border-radius: 3px; box-shadow: inset 0 1px 1px #0001; background: #fff; }
.help { width: 16px; height: 16px; align-self: center; }
.auto { display: flex; align-items: center; height: 18px; }
.auto label { flex: 1; margin-left: 11px; }
.auto input { appearance: none; margin: 0; width: 12px; height: 12px; border: 1px solid #a8a8a8; border-radius: 2px; background: linear-gradient(#f0f0f0, #dcdcdc); }
.del { display: flex; justify-content: flex-end; margin-top: 9px; }
.git .item { padding: 19px 16px 0 10px; margin-bottom: 21px; }
.git .fields { margin-left: 7px; grid-template-columns: 140px 1fr 16px; }
.git .auto { margin-left: 3px; }
.git .del { margin-right: 2px; }
.maven .item { padding: 2px 9px 0 0; margin-bottom: 11px; }
.maven .fields { margin: 4px 0 14px 10px; grid-template-columns: 98px 1fr 16px; }
.maven .auto { margin-left: 6px; }
.maven .del { margin-right: 22px; }
.btn { height: 32px; padding: 0 20px; border: 1px solid #c8c8c8; border-radius: 2px; background: #e0e0e0; color: #4d545d; font: bold 12px/16px "Liberation Sans", Arial, sans-serif; }
.btn.danger { background: #d24939; border-color: #a83a2e; color: #f4e6e4; }
.btn.primary { background: #4b758b; border-color: #5b8299; color: #eee; }
.caret { margin: 0 -11px 0 18px; }
.note { margin: 9px 0 0 -3px; font-size: 11px; line-height: 14px; }
.actions { display: flex; gap: 21px; padding: 29px 0 0 3px; }
.foot { display: flex; justify-content: flex-end; align-items: center; gap: 16px; height: 43px; padding-right: 15px; background: #f6faf2; border-top: 1px solid #d3d7cf; font-size: 12px; flex: none; }
.foot a { color: #5c3566; text-decoration: underline; }
.vscroll { display: flex; flex-direction: column; align-items: center; width: 17px; padding: 7px 0 6px; background: #f1f1f1; }
.vtrack { flex: 1; display: flex; align-items: flex-end; padding: 3px 0 5px; }
.vthumb { width: 13px; height: 63%; background: #c1c1c1; }

/* Taskbar */
.taskbar {
  display: flex; height: 40px; flex: none; border-top: 1px solid #16365c; color: #fff;
  box-shadow: inset 0 1px #8fbce4;
  background:
    linear-gradient(32deg, transparent calc(50% - 12px), #a9d0f8 calc(50% - 4px), #a9d0f8 calc(50% + 4px), transparent calc(50% + 12px)) no-repeat 71% 0 / 110px 40px,
    linear-gradient(90deg, #2f6fa5, #4799c6 6%, #459bd0 15%, #4a9cd0 45%, #2a80c8 58%, #2173bb 72%, #1d5da4 85%, #1b4377 91%, #183c6c);
}
.start { width: 54px; margin-right: 4px; }
.tasks { display: flex; gap: 2px; }
.tasks button { width: 60px; height: 38px; }
.tasks svg { width: 30px; height: 30px; }
.tasks .open { border: 1px solid #d3e8f8a0; outline: 1px solid #1d4a7480; border-radius: 3px; background: linear-gradient(#ffffff60, #ffffff28); margin-top: 1px; }
.tasks .current { background: linear-gradient(#ffffffa8, #ffffff78); }
.tray { display: flex; align-items: center; margin-left: auto; gap: 9px; font-size: 11px; }
.lang { margin: 0 9px 6px 0; }
.clock { display: flex; flex-direction: column; align-items: center; width: 66px; margin-left: 6px; }
.peek { align-self: stretch; width: 14px; border: 1px solid #7a96b8; background: linear-gradient(#5b7da5, #1a3b66); margin: 1px 0 0 -3px; }

/* Explorer window */
.explorer { display: flex; flex-direction: column; min-height: 0; min-width: 0; background: #fcfcfc; }
.glass { display: flex; flex-direction: column; align-items: flex-end; height: 57px; flex: none; padding-right: 2px; border-bottom: 1px solid #123a6c; box-shadow: inset 0 -1px #a9c8ea; background: linear-gradient(100deg, #4a7ab8, #1450a4 10%, #155cb0 28%, #1c6cba 50%, #1458a8 66%, #114c92 76%, #1d5290 90%, #5a80ac); }
.addr-row { display: flex; align-items: center; width: 100%; margin-top: 6px; padding-left: 2px; }
.round { width: 28px; height: 26px; }
.hist { width: 13px; }
.address, .search { display: flex; align-items: center; height: 24px; border: 1px solid #5c7da4; outline: 1px solid #e2edf8; outline-offset: -3px; background: linear-gradient(90deg, #b9cbe4, #c0d8ee 50%, #bccbe0); color: #46566b; }
.address { flex: 1; padding: 0 2px 0 4px; gap: 9px; }
.address .ico { margin-right: -2px; }
.sep { border: solid transparent; border-width: 3px 0 3px 4px; border-left-color: #000; }
.refresh { width: 25px; height: 20px; border-left: 1px solid #6f87a6; }
.search { width: 242px; margin-left: 6px; padding: 0 6px 0 8px; }
.search input { flex: 1; min-width: 0; border: 0; background: none; padding: 0; font: italic 11px/16px "Open Sans", sans-serif; }
.search input::placeholder { color: #6b7785; opacity: 1; }

.commands { display: flex; align-items: center; height: 31px; padding: 0 14px 0 18px; gap: 31px; flex: none; color: #1e395b; background: linear-gradient(#fbfdff, #edf3fb 50%, #dce6f4 50%, #dde7f5); border-bottom: 1px solid #9fb0c8; }
.commands button { gap: 5px; }
.commands .views { gap: 9px; margin-right: -8px; }
.commands button:last-child { margin-left: -10px; }
.tri { border: solid transparent; border-width: 6px 4px 0; border-top-color: #1e395b; }

.panes { flex: 1; display: flex; min-height: 0; }
.tree { width: 352px; padding: 9px 1px 0; overflow: hidden; }
.tree ul { margin-bottom: 21px; }
.tree li { display: flex; align-items: center; gap: 5px; height: 21px; padding-left: 29px; white-space: nowrap; }
.tree .root { padding-left: 19px; }
.tree .sel, .files .sel { border-radius: 3px; box-shadow: inset 0 0 0 1px #d5d5d5; background: linear-gradient(#fafafa, #e5e5e5); }
.tscroll { display: flex; flex-direction: column; align-items: center; width: 16px; padding: 7px 0; background: #f0f0f0; }
.ttrack { flex: 1; padding: 6px 0; }
.tthumb { display: flex; align-items: center; justify-content: center; width: 14px; height: 53%; border: 1px solid #989898; border-radius: 2px; background: linear-gradient(90deg, #f4f4f4, #dcdcdc 50%, #bdbdbd); }
.files { flex: 1; margin-left: 1px; padding-left: 15px; border-left: 1px solid #d6e5f5; }
table { border-collapse: collapse; table-layout: fixed; width: 575px; }
th { position: relative; height: 24px; padding: 0 0 0 7px; text-align: left; font-weight: normal; color: #4c607a; border-right: 1px solid #e3e8ee; }
th.c-name { width: 257px; padding-left: 3px; }
th.c-date, th.c-type { width: 120px; }
thead::after { content: ""; display: block; height: 7px; }
.sort { position: absolute; top: 1px; left: 124px; }
td { height: 21px; padding: 0 0 0 7px; color: #6d6d6d; white-space: nowrap; }
td:first-child { display: flex; align-items: center; gap: 4px; padding-left: 4px; color: #000; }
td:last-child { text-align: right; padding-right: 5px; }

.details { display: flex; gap: 30px; height: 112px; flex: none; padding: 9px 34px 0; background: linear-gradient(#e4ebf6, #f1f4fc 8px, #eff3fb); border-top: 1px solid #c4d2e6; }
.info strong { display: block; font-size: 12px; font-weight: normal; line-height: 16px; margin-bottom: 2px; }
.info .kind { display: block; line-height: 18px; color: #5a6779; }
.info { margin-top: -2px; }
.info dl { display: grid; grid-template-columns: 110px auto; column-gap: 5px; }
.info dt { text-align: right; line-height: 18px; color: #5a6779; }
.info dd { line-height: 18px; color: #1e395b; }
```
